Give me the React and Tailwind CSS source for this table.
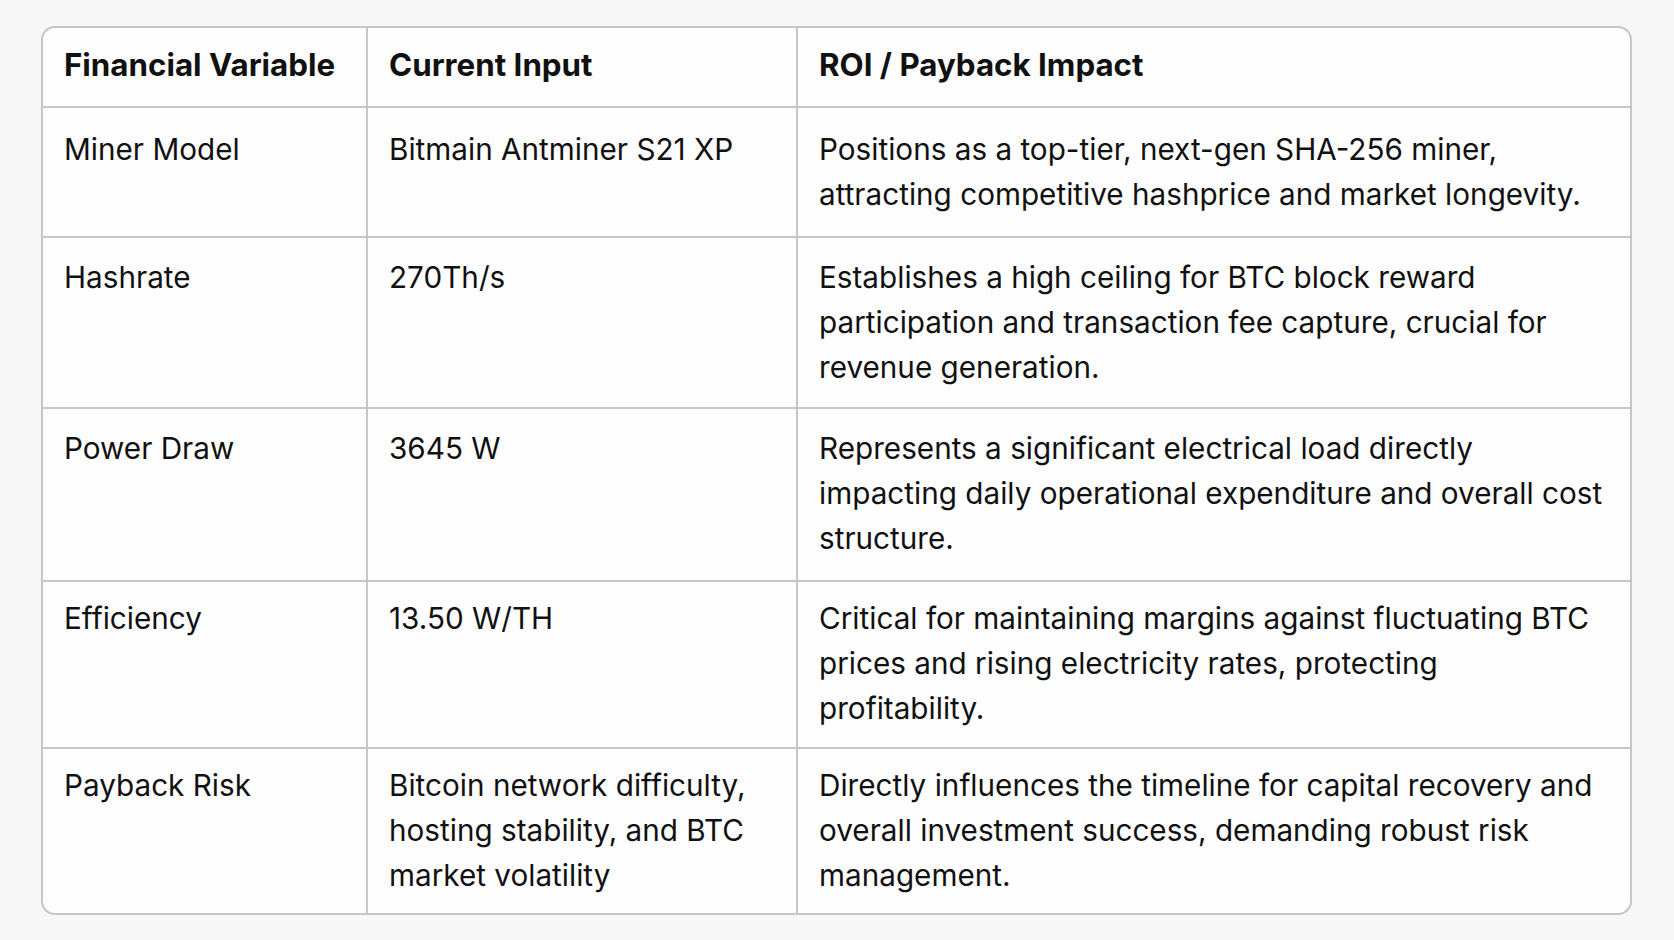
import React from 'react'

const rows = [
  {
    variable: 'Miner Model',
    input: ['Bitmain Antminer S21 XP'],
    impact: [
      'Positions as a top-tier, next-gen SHA-256 miner,',
      'attracting competitive hashprice and market longevity.'
    ],
    pad: 'pt-[19px] pb-[19px]'
  },
  {
    variable: 'Hashrate',
    input: ['270Th/s'],
    impact: [
      'Establishes a high ceiling for BTC block reward',
      'participation and transaction fee capture, crucial for',
      'revenue generation.'
    ],
    pad: 'pt-[17px] pb-[17px]'
  },
  {
    variable: 'Power Draw',
    input: ['3645 W'],
    impact: [
      'Represents a significant electrical load directly',
      'impacting daily operational expenditure and overall cost',
      'structure.'
    ],
    pad: 'pt-[17px] pb-[19px]'
  },
  {
    variable: 'Efficiency',
    input: ['13.50 W/TH'],
    impact: [
      'Critical for maintaining margins against fluctuating BTC',
      'prices and rising electricity rates, protecting',
      'profitability.'
    ],
    pad: 'pt-[14px] pb-[16px]'
  },
  {
    variable: 'Payback Risk',
    input: ['Bitcoin network difficulty,', 'hosting stability, and BTC', 'market volatility'],
    impact: [
      'Directly influences the timeline for capital recovery and',
      'overall investment success, demanding robust risk',
      'management.'
    ],
    pad: 'pt-[14px] pb-[15px]'
  }
]

const Lines = ({ lines }) =>
  lines.map((line, i) => (
    <React.Fragment key={i}>
      {i > 0 && <br />}
      {line}
    </React.Fragment>
  ))

const App = () => {
  return (
    <div className="min-h-screen bg-[#f7f7f7] pl-[41px] pt-[26px] font-['Inter','Noto_Sans',sans-serif] text-[#111111]">
      <div className="w-[1591px] overflow-hidden rounded-[14px] border-2 border-[#c6c6c6] bg-[#fdfdfd]">
        <div className="grid grid-cols-[323px_430px_1fr] text-[29.7px] leading-[45px]">
          {/* Header */}
          <div className="px-[21px] pt-[15px] pb-[18px] text-[31.3px] font-bold">Financial Variable</div>
          <div className="border-l-2 border-[#c6c6c6] px-[21px] pt-[15px] pb-[18px] text-[31.3px] font-bold">Current Input</div>
          <div className="border-l-2 border-[#c6c6c6] px-[21px] pt-[15px] pb-[18px] text-[31.3px] font-bold">ROI / Payback Impact</div>

          {rows.map((row) => (
            <React.Fragment key={row.variable}>
              <div className={`border-t-2 border-[#c6c6c6] px-[21px] ${row.pad}`}>{row.variable}</div>
              <div className={`border-t-2 border-l-2 border-[#c6c6c6] px-[21px] ${row.pad}`}>
                <Lines lines={row.input} />
              </div>
              <div className={`border-t-2 border-l-2 border-[#c6c6c6] px-[21px] whitespace-nowrap ${row.pad}`}>
                <Lines lines={row.impact} />
              </div>
            </React.Fragment>
          ))}
        </div>
      </div>
    </div>
  )
}

export default App
